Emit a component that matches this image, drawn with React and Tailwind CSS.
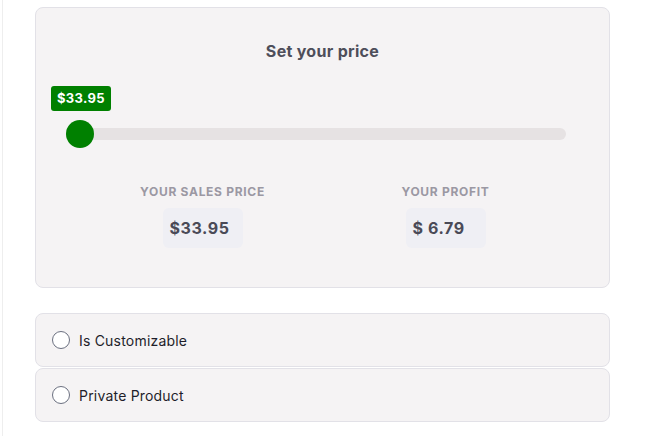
export default function App() {
  const font = { fontFamily: "Inter, 'Noto Sans', sans-serif" };
  return (
    <div className="h-[436px] w-[645px] bg-white" style={font}>
      <div className="ml-[2px] h-full border-l border-[#eeeeee] pl-[32px] pr-[35px] pt-[7px]">
        <div className="h-[281px] rounded-[8px] border border-[#e2e1e7] bg-[#f5f3f4]">
          <h2 className="pt-[32px] text-center text-[16px] font-bold leading-[22px] tracking-[0.3px] text-[#4e4e5a]">
            Set your price
          </h2>

          <div className="ml-[15px] mt-[24px] flex">
            <span className="rounded-[3px] bg-[#008000] px-[6px] py-[5px] text-[13px] font-bold leading-[15px] tracking-[0.3px] text-white">
              $33.95
            </span>
          </div>

          <div className="relative ml-[30px] mt-[9px] h-[28px] w-[500px]">
            <div className="absolute left-0 right-0 top-[8px] h-[12px] rounded-full bg-[#e6e2e3]" />
            <div className="absolute left-0 top-0 h-[28px] w-[28px] rounded-full bg-[#008000]" />
          </div>

          <div className="ml-[45px] mt-[36px] grid w-[486px] grid-cols-2">
            <div className="flex flex-col items-center">
              <span className="text-[12px] font-bold uppercase leading-[16px] tracking-[0.7px] text-[#9b98a3]">
                Your sales price
              </span>
              <div className="mt-[8px] flex h-[40px] w-[80px] items-center rounded-[6px] bg-[#efeff4] pl-[7px] text-[16px] font-bold tracking-[0.6px] text-[#4a4a57]">
                $33.95
              </div>
            </div>
            <div className="flex flex-col items-center">
              <span className="text-[12px] font-bold uppercase leading-[16px] tracking-[0.7px] text-[#9b98a3]">
                Your profit
              </span>
              <div className="mt-[8px] flex h-[40px] w-[80px] items-center rounded-[6px] bg-[#efeff4] pl-[7px] text-[16px] font-bold tracking-[0.6px] text-[#4a4a57]">
                $ 6.79
              </div>
            </div>
          </div>
        </div>

        <div className="mt-[25px] flex flex-col gap-[1px]">
          {["Is Customizable", "Private Product"].map((label) => (
            <label
              key={label}
              className="flex h-[54px] items-center gap-[9px] rounded-[8px] border border-[#e2e1e7] bg-[#f5f3f4] pl-[16px]"
            >
              <span className="h-[18px] w-[18px] rounded-full border-[1.5px] border-[#6b7080] bg-white" />
              <span className="text-[14px] tracking-[0.2px] text-[#1e1e2a]">{label}</span>
            </label>
          ))}
        </div>
      </div>
    </div>
  );
}
